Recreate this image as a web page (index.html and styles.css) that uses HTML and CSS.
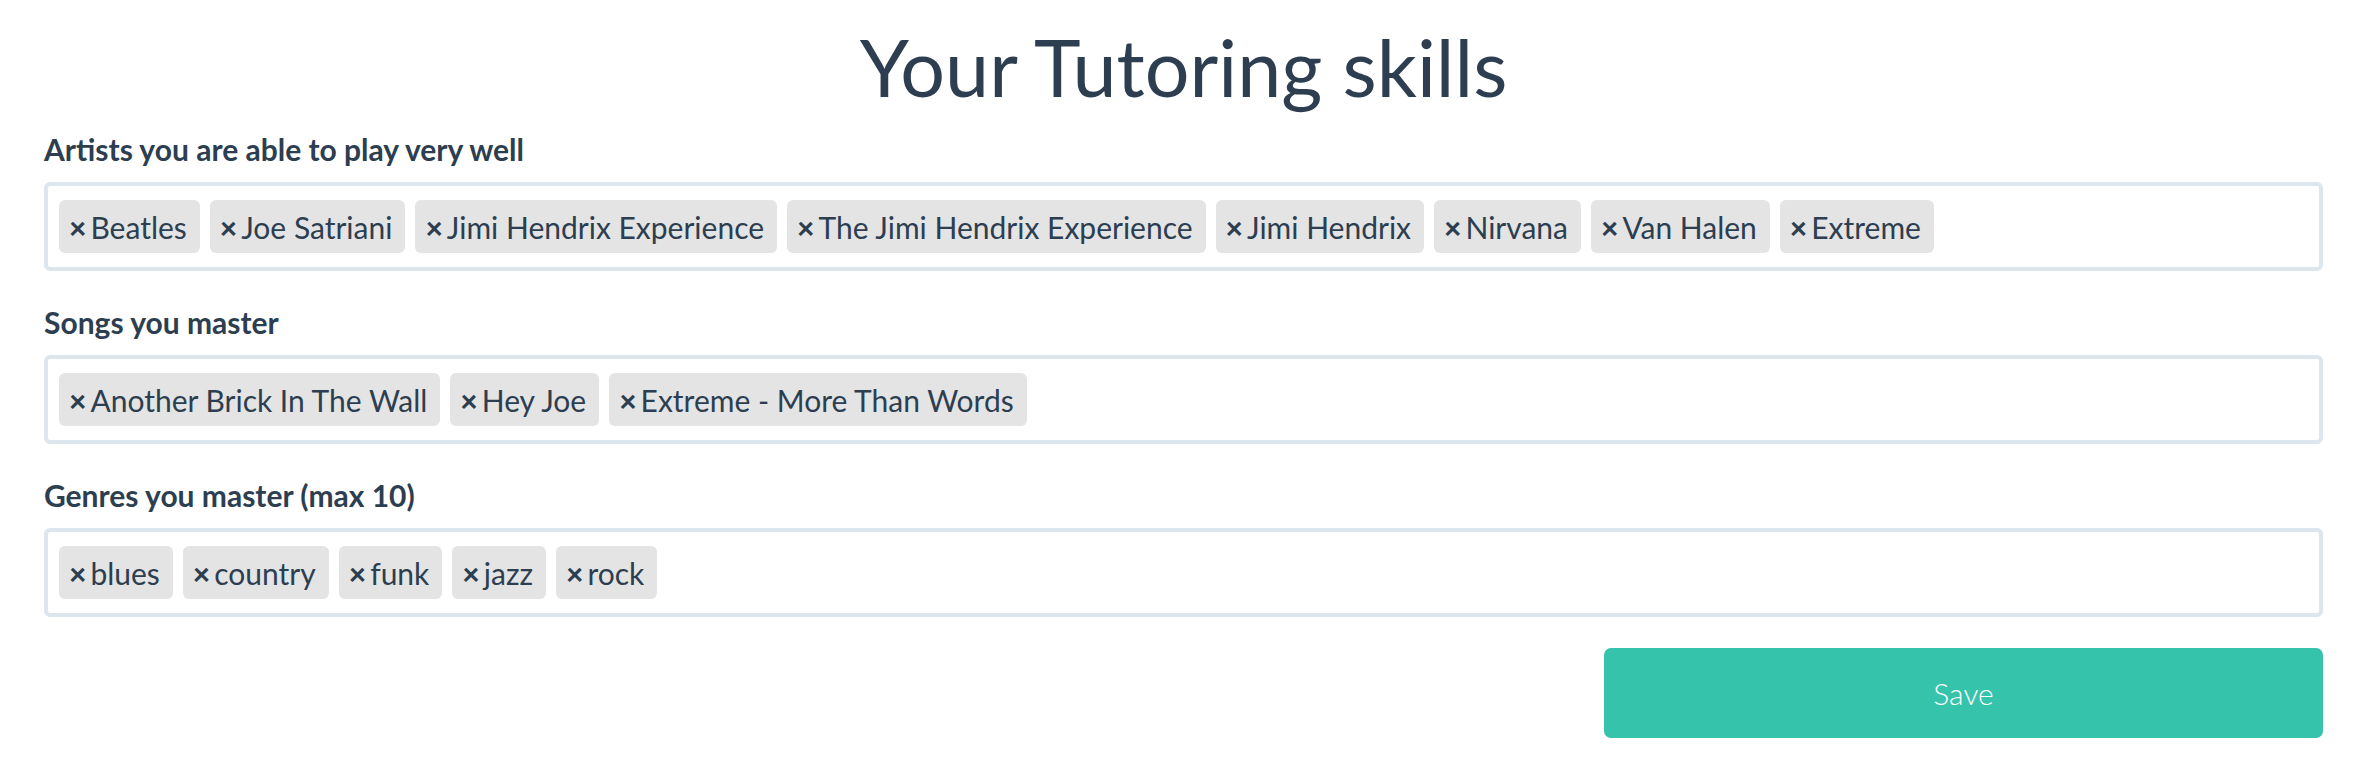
FILE: index.html
```html
<!DOCTYPE html>
<html lang="en">
<head>
  <meta charset="UTF-8">
  <meta name="viewport" content="width=device-width, initial-scale=1.0">
  <title>Your Tutoring skills</title>
  <link rel="stylesheet" href="styles.css">
</head>
<body>
  <div class="container">
    <h1>Your Tutoring skills</h1>

    <div class="field">
      <label>Artists you are able to play very well</label>
      <div class="tags">
        <span class="tag"><span class="remove">×</span>Beatles</span>
        <span class="tag"><span class="remove">×</span>Joe Satriani</span>
        <span class="tag"><span class="remove">×</span>Jimi Hendrix Experience</span>
        <span class="tag"><span class="remove">×</span>The Jimi Hendrix Experience</span>
        <span class="tag"><span class="remove">×</span>Jimi Hendrix</span>
        <span class="tag"><span class="remove">×</span>Nirvana</span>
        <span class="tag"><span class="remove">×</span>Van Halen</span>
        <span class="tag"><span class="remove">×</span>Extreme</span>
      </div>
    </div>

    <div class="field">
      <label>Songs you master</label>
      <div class="tags">
        <span class="tag"><span class="remove">×</span>Another Brick In The Wall</span>
        <span class="tag"><span class="remove">×</span>Hey Joe</span>
        <span class="tag"><span class="remove">×</span>Extreme - More Than Words</span>
      </div>
    </div>

    <div class="field">
      <label>Genres you master (max 10)</label>
      <div class="tags">
        <span class="tag"><span class="remove">×</span>blues</span>
        <span class="tag"><span class="remove">×</span>country</span>
        <span class="tag"><span class="remove">×</span>funk</span>
        <span class="tag"><span class="remove">×</span>jazz</span>
        <span class="tag"><span class="remove">×</span>rock</span>
      </div>
    </div>

    <div class="actions">
      <button class="save">Save</button>
    </div>
  </div>
</body>
</html>
```

FILE: styles.css
```css
body {
  margin: 0;
  font-family: Lato, "Open Sans", sans-serif;
  color: #2c3e50;
  background-color: #fff;
}

.container {
  padding: 0 53px 0 44px;
}

h1 {
  margin: 22px 0 17px;
  font-size: 79px;
  font-weight: 400;
  line-height: 90px;
  text-align: center;
}

.field {
  margin-bottom: 31px;
}

.field label {
  display: block;
  margin-bottom: 13px;
  font-size: 30px;
  font-weight: 700;
  line-height: 40px;
}

.tags {
  display: flex;
  flex-wrap: wrap;
  gap: 10px;
  padding: 14px 11px;
  border: 4px solid #dde5ed;
  border-radius: 6px;
}

.tag {
  display: flex;
  align-items: center;
  height: 53px;
  padding: 0 13px 0 10px;
  background-color: #e4e4e4;
  border-radius: 6px;
  font-size: 30px;
}

.tag .remove {
  font-weight: 900;
  margin-right: 4px;
}

.actions {
  display: flex;
  justify-content: flex-end;
}

.save {
  width: 719px;
  height: 90px;
  border: none;
  border-radius: 7px;
  background-color: #36c3ab;
  color: #fff;
  font-family: Lato, "Open Sans", sans-serif;
  font-size: 30px;
  font-weight: 300;
  cursor: pointer;
}
```
